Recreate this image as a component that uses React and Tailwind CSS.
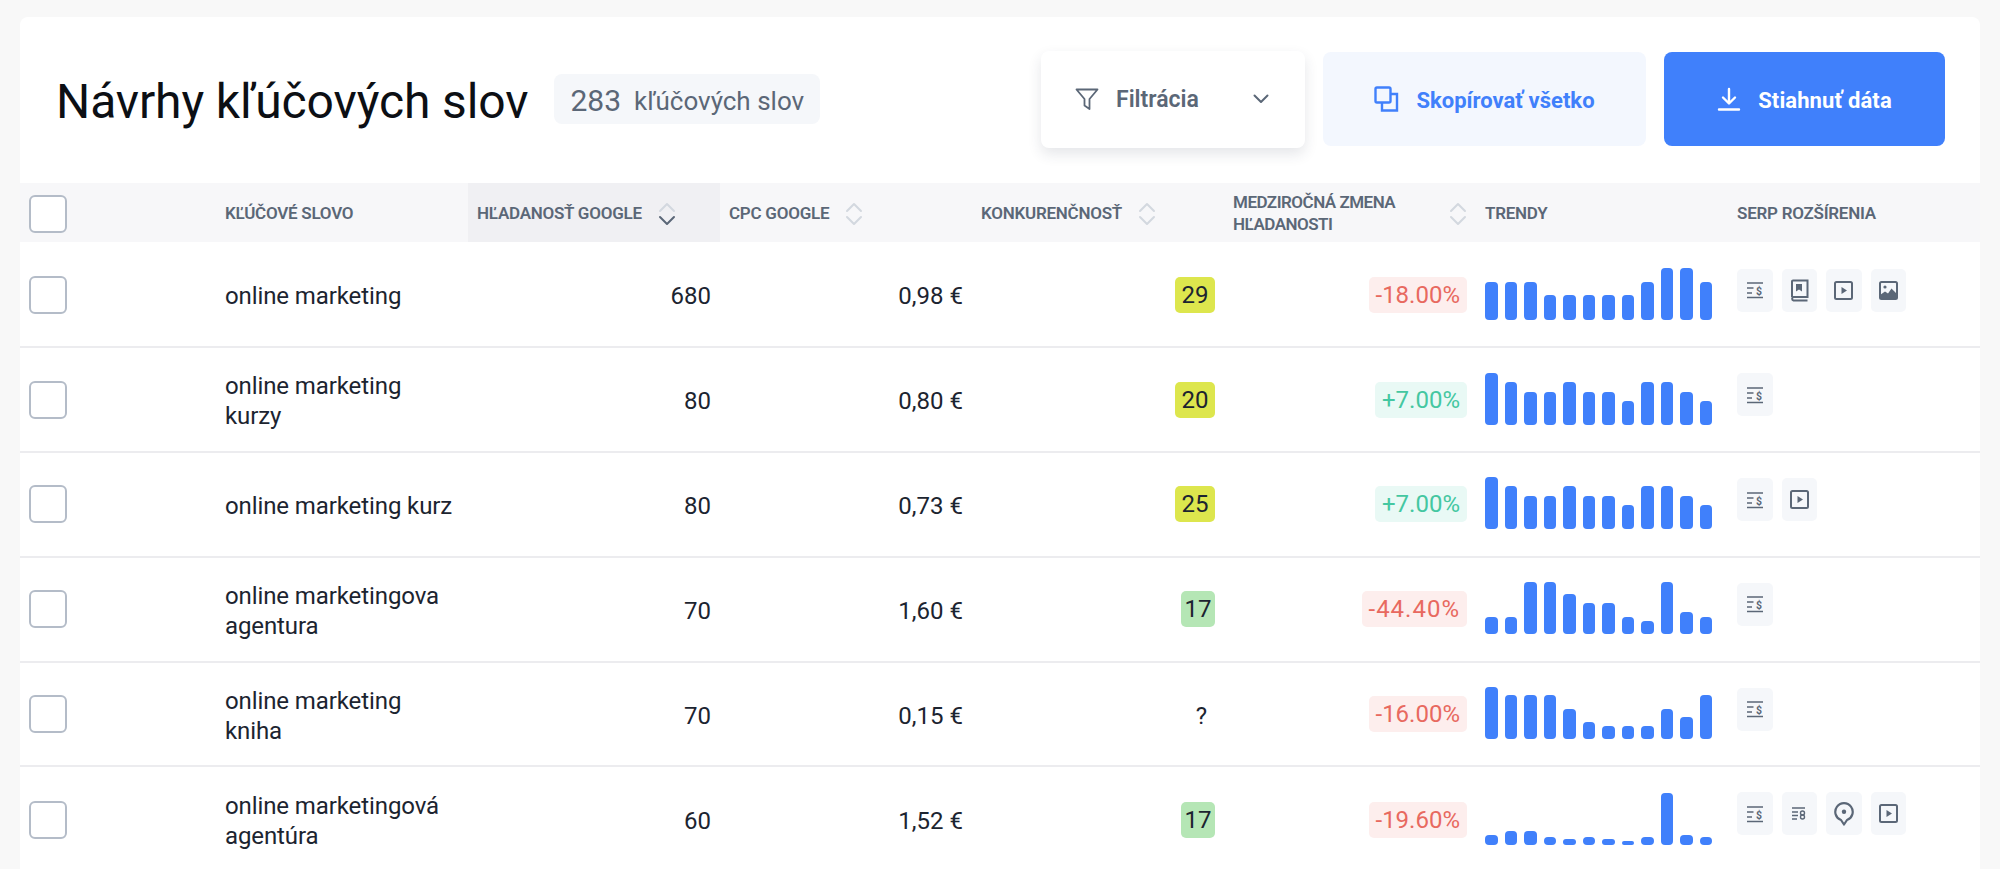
import React from "react";

const F = "font-['Roboto',sans-serif]";

function SortIcon({ active }) {
  return (
    <svg width="18" height="24" viewBox="0 0 18 24" fill="none" strokeWidth="2" strokeLinecap="round" strokeLinejoin="round" className="shrink-0 mt-[2px]">
      <path d="M2 9 9 2l7 7" stroke="#d3d8df" />
      <path d="M2 15 9 22l7-7" stroke={active ? "#5b6777" : "#d3d8df"} />
    </svg>
  );
}

const Check = () => <div className="w-[38px] h-[38px] rounded-[6px] border-2 border-[#b4bcc8] bg-white shrink-0" />;

function Th({ label, sort, active, w = "w-[252px]" }) {
  return (
    <div className={`${w} shrink-0 h-full flex items-center px-[9px] gap-[16px] ${active ? "bg-[#f0f0f3]" : ""}`}>
      <span className="text-[17px] leading-[22px] pt-[1px] font-semibold uppercase tracking-[-0.25px] text-[#5b6777] whitespace-nowrap">{label}</span>
      {sort && <SortIcon active={active} />}
    </div>
  );
}

const stroke = { fill: "none", stroke: "#5b6777", strokeWidth: 2 };

const IconAd = () => (
  <svg width="18" height="18" viewBox="0 0 18 18" {...stroke} strokeWidth="1.7">
    <path d="M1 2h16M1 16.5h16M1 7h6.5M1 12h5" />
    <text x="10" y="13.5" fontSize="10.5" fontWeight="700" fill="#5b6777" stroke="none" fontFamily="Roboto">$</text>
  </svg>
);
const IconBook = () => (
  <svg width="19" height="23" viewBox="0 0 19 23" {...stroke}>
    <path d="M2 18V2.5a1 1 0 0 1 1-1h14.5V18H3.5a1.8 1.8 0 0 0 0 3.5h14" />
    <path d="M6 5h6v7.5l-3-2-3 2z" fill="#5b6777" stroke="none" />
  </svg>
);
const IconVideo = () => (
  <svg width="19" height="19" viewBox="0 0 19 19" {...stroke}>
    <rect x="1" y="1" width="17" height="17" rx="1.5" />
    <path d="M7.5 6v7l5.5-3.5z" fill="#5b6777" stroke="none" />
  </svg>
);
const IconImage = () => (
  <svg width="19" height="19" viewBox="0 0 19 19" {...stroke}>
    <rect x="1" y="1" width="17" height="17" rx="1.5" />
    <circle cx="6" cy="6" r="1.6" fill="#5b6777" stroke="none" />
    <path d="M1 17v-3l5-3.5 3 2 3.5-5L18 13v4.5H1z" fill="#5b6777" stroke="none" />
  </svg>
);
const IconSmall = () => (
  <svg width="14" height="14" viewBox="0 0 14 14" {...stroke} strokeWidth="1.4">
    <path d="M0 1h13M0 5h6M0 8.5h6M0 12h5" />
    <circle cx="10.5" cy="6" r="2" />
    <circle cx="10.5" cy="10" r="2" />
  </svg>
);
const IconPin = () => (
  <svg width="20" height="24" viewBox="0 0 20 24" {...stroke} strokeWidth="2.2">
    <path d="M10 22.5 7 18A8.7 8.7 0 1 1 13 18z" strokeLinejoin="round" />
    <circle cx="10" cy="9.8" r="2.2" fill="#5b6777" stroke="none" />
  </svg>
);
const ICONS = { ad: IconAd, book: IconBook, video: IconVideo, image: IconImage, small: IconSmall, pin: IconPin };

const rows = [
  { k: ["online marketing"], v: "680", c: "0,98 €", s: "29", col: "y", d: "-18.00%", bars: [38,38,38,25,25,25,25,25,38,52,52,38], ic: ["ad","book","video","image"] },
  { k: ["online marketing", "kurzy"], v: "80", c: "0,80 €", s: "20", col: "y", d: "+7.00%", bars: [52,43,33,33,43,33,33,24,43,43,33,24], ic: ["ad"] },
  { k: ["online marketing kurz"], v: "80", c: "0,73 €", s: "25", col: "y", d: "+7.00%", bars: [52,43,33,33,43,33,33,24,43,43,33,24], ic: ["ad","video"] },
  { k: ["online marketingova", "agentura"], v: "70", c: "1,60 €", s: "17", col: "g", d: "-44.40%", wide: true, bars: [17,17,52,52,40,31,31,17,13,52,22,17], ic: ["ad"] },
  { k: ["online marketing", "kniha"], v: "70", c: "0,15 €", s: "?", col: "n", d: "-16.00%", bars: [52,44,44,44,30,17,13,13,13,30,22,44], ic: ["ad"] },
  { k: ["online marketingová", "agentúra"], v: "60", c: "1,52 €", s: "17", col: "g", d: "-19.60%", bars: [10,14,14,8,6,8,6,4,8,52,10,8], ic: ["ad","small","pin","video"] },
];

function Row({ r, last }) {
  const neg = r.d.startsWith("-");
  return (
    <div className={`flex h-[104.8px] shrink-0 ${last ? "" : "border-b-2 border-[#ececef]"}`}>
      <div className="w-[196px] shrink-0 flex items-center pl-[9px]"><Check /></div>
      <div className="w-[252px] shrink-0 flex items-center px-[9px]">
        <div className="text-[24px] leading-[30px] pt-[3px] tracking-[-0.1px] text-[#1c2430]">
          {r.k.map((t) => <div key={t} className="whitespace-nowrap">{t}</div>)}
        </div>
      </div>
      <div className="w-[252px] shrink-0 flex items-center justify-end pr-[9px] pt-[3px] text-[24px] text-[#1c2430]">{r.v}</div>
      <div className="w-[252px] shrink-0 flex items-center justify-end pr-[9px] pt-[3px] text-[24px] text-[#1c2430]">{r.c}</div>
      <div className="w-[252px] shrink-0 flex items-center justify-end pr-[9px]">
        {r.col === "n" ? (
          <span className="text-[24px] text-[#1c2430] pr-[8px] pt-[3px]">{r.s}</span>
        ) : (
          <span className={`h-[36px] rounded-[5px] flex items-center justify-center text-[24px] text-[#1c2430] ${r.col === "y" ? "bg-[#dde64d] w-[40px]" : "bg-[#b5e6b5] w-[34px]"}`}>{r.s}</span>
        )}
      </div>
      <div className="w-[252px] shrink-0 flex items-center justify-end pr-[9px]">
        <span className={`h-[36px] px-[7px] rounded-[5px] flex items-center text-[24px] ${neg ? "bg-[#fdeeed] text-[#e8695f]" : "bg-[#e9f9f5] text-[#44c7a1]"} ${r.wide ? "tracking-[1px]" : ""}`}>{r.d}</span>
      </div>
      <div className="w-[252px] shrink-0 flex items-center px-[9px] pb-[2px]">
        <div className="flex items-end gap-[7px] h-[52px]">
          {r.bars.map((h, i) => (
            <div key={i} className="w-[12.5px] bg-[#4080fb] rounded-[4px]" style={{ height: h }} />
          ))}
        </div>
      </div>
      <div className="w-[252px] shrink-0 flex items-start pt-[25px] pl-[9px] gap-[9px]">
        {r.ic.map((n, i) => {
          const I = ICONS[n];
          return (
            <div key={i} className="w-[35.6px] h-[43px] rounded-[5px] bg-[#f5f7fa] flex items-center justify-center"><I /></div>
          );
        })}
      </div>
    </div>
  );
}

export default function App() {
  return (
    <div className={`h-[869px] w-[2000px] overflow-hidden bg-[#f8f8f8] pt-[17px] pl-[20px] ${F}`}>
      <div className="w-[1960px] bg-white rounded-t-[8px]">
        <div className="h-[166px] flex items-center pl-[36px] pr-[35px] pb-[2px]">
          <h1 className="text-[48px] font-normal text-[#0c0f14] whitespace-nowrap pt-[6px] tracking-[-0.1px]">Návrhy kľúčových slov</h1>
          <div className="ml-[26px] h-[50px] rounded-[8px] bg-[#f5f7fa] flex items-center px-[16px] gap-[13px] text-[#5b6777]">
            <span className="text-[30px] pt-[3px]">283</span>
            <span className="text-[26px] pt-[4px]">kľúčových slov</span>
          </div>
          <div className="ml-auto flex items-center gap-[18px] h-[97px]">
            <button className="w-[264px] h-[97px] rounded-[8px] bg-white shadow-[0_6px_14px_rgba(40,50,70,0.12)] flex items-center pl-[34px] pr-[36px] text-[#5b6777]">
              <svg width="24" height="24" viewBox="0 0 24 24" fill="none" stroke="#5b6777" strokeWidth="1.8" strokeLinejoin="round">
                <path d="M1.5 2.5h21L14.5 12v10l-5-3.5V12z" />
              </svg>
              <span className="ml-[17px] text-[23px] font-semibold pt-[3px]">Filtrácia</span>
              <svg className="ml-auto" width="16" height="10" viewBox="0 0 16 10" fill="none" stroke="#5b6777" strokeWidth="2" strokeLinecap="round" strokeLinejoin="round">
                <path d="M1.5 1.5 8 8l6.5-6.5" />
              </svg>
            </button>
            <button className="w-[323px] h-[94px] rounded-[8px] bg-[#f3f7fe] flex items-center justify-center gap-[17px] text-[#4080fb]">
              <svg width="25" height="26" viewBox="0 0 25 26" fill="none" stroke="#4080fb" strokeWidth="2.4">
                <rect x="1.5" y="1.5" width="15" height="15" rx="1.5" />
                <path d="M17 8h6v16.5H8V17" />
              </svg>
              <span className="text-[22px] font-bold pt-[2px]">Skopírovať všetko</span>
            </button>
            <button className="w-[281px] h-[94px] rounded-[8px] bg-[#4080fb] flex items-center justify-center gap-[17px] text-white">
              <svg width="24" height="24" viewBox="0 0 24 24" fill="none" stroke="white" strokeWidth="2.4" strokeLinecap="round" strokeLinejoin="round">
                <path d="M12 2v14M6 10.5l6 6 6-6M2 22.5h20" />
              </svg>
              <span className="text-[22px] font-bold tracking-[0.1px] pt-[2px]">Stiahnuť dáta</span>
            </button>
          </div>
        </div>
        <div className="flex h-[59px] bg-[#f7f7f9]">
          <div className="w-[196px] shrink-0 flex items-center pl-[9px] pt-[2px]"><Check /></div>
          <Th label="Kľúčové slovo" />
          <Th label="Hľadanosť Google" sort active />
          <Th label="CPC Google" sort />
          <Th label="Konkurenčnosť" sort />
          <div className="w-[252px] shrink-0 h-full flex items-center pl-[9px] pr-[9px] justify-between">
            <span className="text-[17px] leading-[22px] pt-[1px] font-semibold uppercase tracking-[-0.5px] text-[#5b6777] whitespace-nowrap">Medziročná zmena<br />hľadanosti</span>
            <SortIcon />
          </div>
          <Th label="Trendy" />
          <Th label="SERP rozšírenia" />
        </div>
        <div className="pt-[1.5px]">
          {rows.map((r, i) => <Row key={i} r={r} last={i === rows.length - 1} />)}
        </div>
      </div>
    </div>
  );
}
